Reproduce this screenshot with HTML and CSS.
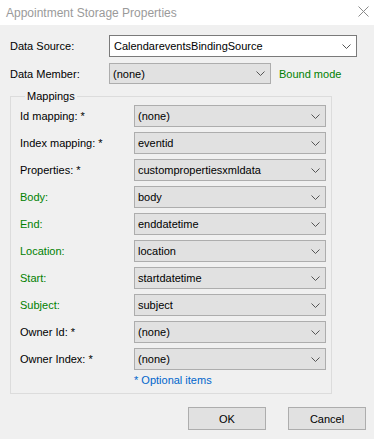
FILE: index.html
```html
<!DOCTYPE html>
<html lang="en">
<head>
    <meta charset="UTF-8">
    <title>Appointment Storage Properties</title>
    <link rel="stylesheet" href="styles.css">
</head>
<body>
    <div class="titlebar">
        <span class="title">Appointment Storage Properties</span>
        <svg class="close" width="11" height="11" viewBox="0 0 11 11">
            <path d="M0.5 0.5 L10.5 10.5 M10.5 0.5 L0.5 10.5" stroke="#8a8a8a" stroke-width="1" fill="none"/>
        </svg>
    </div>

    <div class="content">
        <div class="top-row">
            <span class="label">Data Source:</span>
            <div class="combo combo-white wide">
                <span>CalendareventsBindingSource</span>
                <svg width="9" height="5" viewBox="0 0 9 5"><polyline points="0.5,0.5 4.5,4.5 8.5,0.5" stroke="#555" fill="none"/></svg>
            </div>
        </div>
        <div class="top-row second">
            <span class="label">Data Member:</span>
            <div class="combo member">
                <span>(none)</span>
                <svg width="9" height="5" viewBox="0 0 9 5"><polyline points="0.5,0.5 4.5,4.5 8.5,0.5" stroke="#555" fill="none"/></svg>
            </div>
            <span class="green bound">Bound mode</span>
        </div>

        <fieldset class="mappings">
            <legend>Mappings</legend>
            <div class="map-grid" id="mapGrid"></div>
            <div class="optional">* Optional items</div>
        </fieldset>

        <div class="buttons">
            <button class="btn">OK</button>
            <button class="btn">Cancel</button>
        </div>
    </div>

    <script>
        var rows = [
            ['Id mapping: *', '(none)', false],
            ['Index mapping: *', 'eventid', false],
            ['Properties: *', 'custompropertiesxmldata', false],
            ['Body:', 'body', true],
            ['End:', 'enddatetime', true],
            ['Location:', 'location', true],
            ['Start:', 'startdatetime', true],
            ['Subject:', 'subject', true],
            ['Owner Id: *', '(none)', false],
            ['Owner Index: *', '(none)', false]
        ];

        var grid = document.getElementById('mapGrid');
        rows.forEach(function(r) {
            var label = document.createElement('span');
            label.className = 'label' + (r[2] ? ' green' : '');
            label.textContent = r[0];
            var combo = document.createElement('div');
            combo.className = 'combo';
            combo.innerHTML = '<span>' + r[1] + '</span>' +
                '<svg width="9" height="5" viewBox="0 0 9 5"><polyline points="0.5,0.5 4.5,4.5 8.5,0.5" stroke="#555" fill="none"/></svg>';
            grid.appendChild(label);
            grid.appendChild(combo);
        });
    </script>
</body>
</html>
```
FILE: styles.css
```css
body {
    margin: 0;
    width: 374px;
    height: 439px;
    background-color: #f0f0f0;
    font-family: 'Liberation Sans', Arial, sans-serif;
    font-size: 11px;
    color: #000;
    overflow: hidden;
}

.titlebar {
    height: 25px;
    background-color: #fff;
    display: flex;
    align-items: center;
    justify-content: space-between;
    padding: 0 5px 0 6px;
}

.title {
    font-size: 12px;
    color: #9a9a9a;
}

.close {
    margin-top: -3px;
}

.content {
    padding: 10px 0 0 10px;
}

.top-row {
    display: flex;
    align-items: center;
}

.top-row .label {
    width: 99px;
}

.second {
    margin-top: 6px;
}

.combo {
    box-sizing: border-box;
    height: 22px;
    display: flex;
    align-items: center;
    justify-content: space-between;
    padding: 0 5px 0 3px;
    background-color: #e1e1e1;
    border: 1px solid #adadad;
}

.combo-white {
    background-color: #fff;
    border-color: #7a7a7a;
    padding-left: 4px;
}

.wide {
    width: 248px;
}

.member {
    width: 162px;
    height: 21px;
}

.green {
    color: #008000;
}

.bound {
    margin-left: 8px;
}

.mappings {
    box-sizing: border-box;
    width: 322px;
    margin: 6px 0 0 0;
    padding: 2px 4px 6px 9px;
    border: 1px solid #dcdcdc;
}

.mappings legend {
    margin-left: 5px;
    padding: 0 2px;
    line-height: 13px;
}

.map-grid {
    display: grid;
    grid-template-columns: 114px 192px;
    row-gap: 5px;
    align-items: center;
}

.optional {
    margin: 4px 0 0 114px;
    color: #0066cc;
    line-height: 13px;
}

.buttons {
    display: flex;
    justify-content: flex-end;
    gap: 22px;
    padding-right: 8px;
    margin-top: 13px;
}

.btn {
    width: 78px;
    height: 23px;
    background-color: #e1e1e1;
    border: 1px solid #adadad;
    font-family: 'Liberation Sans', Arial, sans-serif;
    font-size: 11px;
    color: #000;
    padding: 0;
}
```
